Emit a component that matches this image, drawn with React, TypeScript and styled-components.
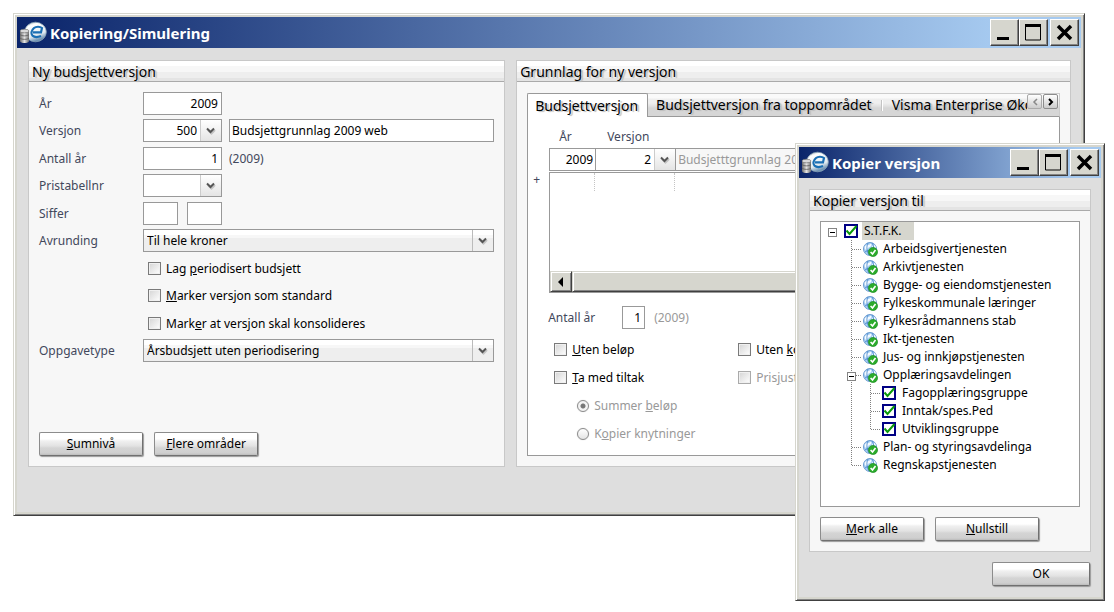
import React, { ReactNode, useState } from "react";
import styled, { createGlobalStyle, css } from "styled-components";

const GlobalStyle = createGlobalStyle`
  *, *::before, *::after { box-sizing: border-box; }
  body {
    margin: 0;
    background: #fff;
    font-family: "Noto Sans", "DejaVu Sans", sans-serif;
    font-size: 12px;
    line-height: 16px;
    color: #000;
  }
  input, select, button { font: inherit; color: inherit; margin: 0; }
`;

const line = "#999";
const labelColor = "#42485c";

/* ---------- window frame ---------- */

const Desktop = styled.main`
  position: relative;
  min-height: 100vh;
  padding: 13px 29px 97px 13px;
`;

const Frame = styled.section`
  display: flex;
  flex-direction: column;
  border: 1px solid;
  border-color: #d6d6ce #404040 #404040 #d6d6ce;
  background: #dedede;
  box-shadow: inset 1px 1px 0 #fff, inset -1px -1px 0 #848484, inset 2px 2px 0 1px #d6d6ce,
    inset -2px -2px 0 1px #d6d6ce;
  padding: 3px;
`;

const DialogFrame = styled(Frame)`
  position: absolute;
  top: 143px;
  right: 9px;
  width: 310px;
`;

const TitleBar = styled.header`
  display: flex;
  align-items: center;
  height: 31px;
  padding: 0 2px;
  background: linear-gradient(to right, #0a246a, #a6caf0 92%);
`;

const TitleText = styled.h1`
  flex: 1;
  margin: 0 0 0 3px;
  font-size: 15px;
  line-height: 20px;
  font-weight: 700;
  color: #fff;
  white-space: nowrap;
`;

const CaptionButton = styled.button<{ $apart?: boolean }>`
  display: grid;
  place-items: center;
  width: 29px;
  height: 27px;
  padding: 0;
  margin-left: ${(p) => (p.$apart ? "2px" : "0")};
  background: #d6d6ce;
  border: 1px solid;
  border-color: #fff #404040 #404040 #fff;
  box-shadow: inset -1px -1px 0 #848484;
`;

const AppIcon = () => (
  <svg width="28" height="24" viewBox="0 0 28 24" aria-hidden="true">
    <defs>
      <linearGradient id="ball" x1="0" y1="0" x2="0.4" y2="1">
        <stop offset="0" stopColor="#8fa3ae" />
        <stop offset="0.25" stopColor="#ffffff" />
        <stop offset="0.75" stopColor="#e2ebf1" />
        <stop offset="1" stopColor="#6f93b3" />
      </linearGradient>
      <linearGradient id="drum" x1="0" y1="0" x2="1" y2="0">
        <stop offset="0" stopColor="#6d6d6d" />
        <stop offset="0.5" stopColor="#e2e2e2" />
        <stop offset="1" stopColor="#707070" />
      </linearGradient>
    </defs>
    <ellipse cx="16.500" cy="11" rx="10.800" ry="9.800" fill="url(#ball)" stroke="#8ba4b8" strokeWidth="0.800" />
    <path d="M14 11.300 H22 L23 7 C21 5.300 17 5.300 15 7 C12 9.500 11.800 13 13.500 14.600 C15.500 16.400 19.500 16 22 15" fill="none" stroke="#1a6fb4" strokeWidth="2.200" />
    <path d="M1 10 V20 C1 22.800 10 22.800 10 20 V10 Z" fill="url(#drum)" />
    <ellipse cx="5.500" cy="10" rx="4.500" ry="1.800" fill="#d9d9d9" stroke="#777" strokeWidth="0.700" />
    <path d="M1 13.500 C2 15.300 9 15.300 10 13.500 M1 17 C2 18.800 9 18.800 10 17" fill="none" stroke="#5a5a5a" strokeWidth="0.800" />
  </svg>
);

const WindowTitle = ({ children }: { children: string }) => (
  <TitleBar>
    <AppIcon />
    <TitleText>{children}</TitleText>
    <CaptionButton type="button" aria-label="Minimer">
      <svg width="17" height="17">
        <rect x="1" y="13" width="12" height="3" />
      </svg>
    </CaptionButton>
    <CaptionButton type="button" aria-label="Maksimer">
      <svg width="17" height="17">
        <path d="M.5 1v15h15V1z" fill="none" stroke="#000" />
        <path d="M0 0h16v3H0z" />
      </svg>
    </CaptionButton>
    <CaptionButton type="button" aria-label="Lukk" $apart>
      <svg width="17" height="17">
        <path d="M2 2 L15 15 M15 2 L2 15" stroke="#000" strokeWidth="3.500" />
      </svg>
    </CaptionButton>
  </TitleBar>
);

/* ---------- panels ---------- */

const MainBody = styled.div`
  display: grid;
  grid-template-columns: minmax(0, 43fr) minmax(0, 50fr);
  gap: 11px;
  padding: 12px 10px 45px 11px;
`;

const DialogBody = styled.div`
  display: flex;
  flex-direction: column;
  padding: 11px 10px;
`;

const Panel = styled.section`
  display: flex;
  flex-direction: column;
  border: 1px solid #c8c8c8;
  background: #f7f7f7;
`;

const PanelTitle = styled.h2`
  margin: 0;
  height: 21px;
  padding: 0 3px;
  border-bottom: 1px solid #aaa;
  background: linear-gradient(#fff 0 5px, #f7f7f7 5px 11px, #eee 11px 17px, #e4e4e4 17px);
  font-size: 14px;
  line-height: 22px;
  font-weight: 400;
  text-shadow: 2px 1px 1px #bbb;
  white-space: nowrap;
`;

const PanelBody = styled.div`
  flex: 1;
  display: flex;
  flex-direction: column;
  padding: 10px;
`;

const ButtonRow = styled.div`
  display: flex;
  gap: 11px;
  margin-top: auto;
`;

const PushButton = styled.button<{ $wide?: boolean }>`
  width: ${(p) => (p.$wide ? "104px" : "98px")};
  height: 24px;
  padding: 0;
  border: 1px solid;
  border-color: #8c8c8c #707070 #707070 #8c8c8c;
  border-radius: 2px;
  background: linear-gradient(#fff 0 6px, #f0f0f0 8px, #e2e2e2 13px, #d4d4d4 15px, #cfcfcf 20px, #bbb);
  box-shadow: 1px 1px 1px #999;
`;

const OkRow = styled.div`
  display: flex;
  justify-content: flex-end;
  padding: 10px 1px 0 0;
`;

/* ---------- form controls ---------- */

const FormGrid = styled.div`
  display: grid;
  grid-template-columns: 104px minmax(0, 1fr);
  grid-auto-rows: 27px 28px;
`;

const Label = styled.label`
  line-height: 23px;
  color: ${labelColor};
  white-space: nowrap;
`;

const Line = styled.div`
  display: flex;
  align-items: center;
  height: 23px;
`;

const TextInput = styled.input<{ $size?: "pair" | "tiny" | "full"; $right?: boolean; $after?: number }>`
  height: 23px;
  padding: 0 3px 0 2px;
  border: 1px solid ${line};
  background: #fff;
  text-align: ${(p) => (p.$right ? "right" : "left")};
  margin-right: ${(p) => p.$after ?? 0}px;
  outline: none;
  ${(p) =>
    p.$size === "full"
      ? css`
          flex: 1;
          min-width: 0;
        `
      : css`
          width: ${p.$size === "tiny" ? "23px" : p.$size === "pair" ? "35px" : "79px"};
        `}
`;

const ComboBox = styled.div<{ $flat?: boolean }>`
  display: flex;
  width: ${(p) => (p.$flat ? "80px" : "79px")};
  height: 23px;
  margin-right: ${(p) => (p.$flat ? "0" : "7px")};
  border: 1px solid ${line};
  border-left-width: ${(p) => (p.$flat ? "0" : "1px")};
  background: #fff;

  input {
    flex: 1;
    min-width: 0;
    padding: 0 3px;
    border: 0;
    background: transparent;
    text-align: right;
    outline: none;
  }
`;

const ComboButton = styled.button`
  display: grid;
  place-items: center;
  width: 21px;
  padding: 0;
  border: 0;
  border-left: 1px solid #ccc;
  background: linear-gradient(#fff, #f5f5f5 8px, #e4e4e4);
`;

const Chevron = () => (
  <svg width="10" height="8" viewBox="0 0 10 8" aria-hidden="true">
    <path d="M2 3 L5.500 6.500 L9 3" fill="none" stroke="#c4c4c4" strokeWidth="2" />
    <path d="M1 1.500 L4.500 5 L8 1.500" fill="none" stroke="#555" strokeWidth="2" />
  </svg>
);

const Combo = ({ id, value, label, flat }: { id: string; value: string; label?: string; flat?: boolean }) => (
  <ComboBox $flat={flat}>
    <input id={id} defaultValue={value} aria-label={label} />
    <ComboButton type="button" aria-label="Velg">
      <Chevron />
    </ComboButton>
  </ComboBox>
);

const SelectBox = styled.div`
  display: grid;
  grid-template-columns: minmax(0, 1fr) 21px;
  height: 23px;
  border: 1px solid ${line};
  background: linear-gradient(#fff 0 5px, #f7f7f7 5px 8px, #eee 8px);

  select {
    grid-area: 1 / 1 / 2 / 3;
    appearance: none;
    padding: 0 24px 0 3px;
    border: 0;
    background: transparent;
    outline: none;
  }
`;

const SelectMark = styled.span`
  grid-area: 1 / 2;
  display: grid;
  place-items: center;
  border-left: 1px solid #bbb;
  pointer-events: none;
`;

const Select = ({ id, value }: { id: string; value: string }) => (
  <SelectBox>
    <select id={id}>
      <option>{value}</option>
    </select>
    <SelectMark>
      <Chevron />
    </SelectMark>
  </SelectBox>
);

const Choice = styled.label<{ $off?: boolean }>`
  display: flex;
  align-items: center;
  gap: 5px;
  height: 23px;
  color: ${(p) => (p.$off ? "#999" : "#000")};
  white-space: nowrap;
`;

const CheckInput = styled.input.attrs({ type: "checkbox" })`
  appearance: none;
  width: 13px;
  height: 13px;
  border: 1px solid #7a7a7a;
  background: linear-gradient(135deg, #d4d4d4, #fff);
  box-shadow: inset 0 0 0 1px #f0f0f0;

  &:checked { background: #555; }
  &:disabled { border-color: #aaa; }
`;

const RadioInput = styled.input.attrs({ type: "radio" })`
  appearance: none;
  width: 12px;
  height: 12px;
  border: 1px solid #8a8a8a;
  border-radius: 50%;
  background: linear-gradient(#fff, #e4e4e4);
  box-shadow: 0 0 1px #bbb;

  &:checked { background: radial-gradient(circle, #777 0 2px, #f4f4f4 3px); }
`;

const Indent = styled.div`
  padding-left: 5px;
`;

/* ---------- tabs ---------- */

const Tabs = styled.div`
  flex: 1;
  display: flex;
  flex-direction: column;
  margin-top: 1px;
`;

const TabStrip = styled.div`
  display: flex;
  height: 24px;
  border-top: 1px solid #ccc;
  border-right: 1px solid #ccc;
  border-bottom: 1px solid ${line};
  background: linear-gradient(#fafafa 0 4px, #efefef 5px 9px, #e2e2e2 12px, #d6d6d6 14px);
`;

const TabList = styled.div`
  flex: 1;
  display: flex;
  min-width: 0;
  margin: -1px 0;
  overflow: hidden;
`;

const Tab = styled.button<{ $active?: boolean }>`
  flex: none;
  padding: 0 9px 0 8px;
  border: 0;
  background: transparent;
  font-size: 14px;
  line-height: 22px;
  text-shadow: 2px 1px 1px #bbb;
  white-space: nowrap;
  border-right: 1px solid transparent;

  ${(p) =>
    p.$active &&
    css`
      border: 1px solid ${line};
      border-bottom: 0;
      border-radius: 2px 2px 0 0;
      background: #fff;
      padding: 0 9px 0 7px;
    `}
`;

const TabDivider = styled.span`
  flex: none;
  width: 1px;
  height: 11px;
  margin: 7px 1px 0 0;
  background: #fff;
  box-shadow: -1px 0 0 #c4c4c4;
`;

const TabArrow = styled.button`
  display: grid;
  place-items: center;
  width: 15px;
  height: 15px;
  margin-right: 1px;
  padding: 0;
  border: 1px solid #8c8c8c;
  border-radius: 2px;
  background: linear-gradient(#fff, #ccc);

  &:disabled { border-color: #aaa; }
`;

const TabPane = styled.div`
  flex: 1;
  display: flex;
  flex-direction: column;
  padding: 8px 11px 10px 5px;
  border: 1px solid ${line};
  border-top: 0;
  background: #fff;
`;

/* ---------- version grid in the right panel ---------- */

const HeadRow = styled.div`
  display: grid;
  grid-template-columns: 48px 1fr;
  padding-left: 26px;
`;

const GridBlock = styled.div`
  display: grid;
  grid-template-columns: 16px minmax(0, 1fr);
`;

const GridLine = styled.div`
  grid-column: 2;
  display: flex;
  margin-bottom: 1px;
`;

const YearInput = styled(TextInput)`
  width: 47px;
  padding-right: 2px;
`;

const NameInput = styled(TextInput)`
  border-left-width: 0;
  background: #f7f7f7;
  color: #999;
`;

const AddRow = styled.button`
  align-self: start;
  justify-self: start;
  padding: 0;
  border: 0;
  background: none;
  color: ${labelColor};
`;

const ListBox = styled.div`
  display: flex;
  flex-direction: column;
  justify-content: space-between;
  height: 121px;
  border: 1px solid ${line};
`;

const ColumnMarks = styled.div`
  display: grid;
  grid-template-columns: 44px 80px 1fr;
  height: 18px;

  span + span { border-left: 1px dotted #c4c4c4; }
`;

const ScrollBar = styled.div`
  display: grid;
  grid-template-columns: 22px 1fr;
  height: 21px;
`;

const ScrollPart = styled.button`
  display: grid;
  place-items: center;
  padding: 0;
  border: 1px solid;
  border-color: #d6d6ce #404040 #404040 #d6d6ce;
  background: #d6d6ce;
  box-shadow: inset 1px 1px 0 #fff, inset -1px -1px 0 #848484;
`;

const YearsRow = styled.div`
  display: flex;
  align-items: center;
  padding: 13px 0 9px 15px;

  label { width: 74px; }
`;

const Muted = styled.span<{ $strong?: boolean }>`
  color: ${(p) => (p.$strong ? labelColor : "#999")};
`;

const Options = styled.div`
  display: grid;
  grid-template-columns: 184px 1fr;
  row-gap: 5px;
  padding-left: 21px;
`;

const RadioRow = styled.div`
  grid-column: 1 / 3;
  padding-left: 23px;
`;

/* ---------- tree ---------- */

const TreeBox = styled.ul`
  list-style: none;
  height: 286px;
  margin: 0 0 10px;
  padding: 0 0 0 2px;
  border: 1px solid ${line};
  background: #fff;
`;

const TreeRow = styled.li`
  display: flex;
  align-items: center;
  height: 18px;
`;

const TreeLabel = styled.label<{ $selected?: boolean }>`
  height: 18px;
  margin-left: 3px;
  padding: 0 2px;
  padding-right: ${(p) => (p.$selected ? "12px" : "2px")};
  line-height: 18px;
  background: ${(p) => (p.$selected ? "#d6d6ce" : "transparent")};
  white-space: nowrap;
`;

const CheckCell = styled.span`
  display: grid;
  margin-left: 2px;

  input, svg { grid-area: 1 / 1; }
  svg { pointer-events: none; }
`;

const TreeCheck = styled.input.attrs({ type: "checkbox" })`
  appearance: none;
  width: 14px;
  height: 14px;
  margin-right: 1px;
  border: 2px solid #000084;
  background: #fff;

  &:not(:checked) + svg { visibility: hidden; }
`;

const GlobeCell = styled.span`
  display: grid;
  margin-left: 2px;
`;

type GuideKind = "blank" | "through" | "branch" | "last" | "root" | "node";

const Guide = ({ kind }: { kind: GuideKind }) => (
  <svg width="19" height="18" aria-hidden="true">
    {kind !== "blank" && kind !== "root" && (
      <path d={kind === "last" ? "M9.500 0V10" : "M9.500 0V18"} stroke="#808080" strokeDasharray="1 1" />
    )}
    {(kind === "branch" || kind === "last" || kind === "node") && (
      <path d="M10 9.500H20" stroke="#808080" strokeDasharray="1 1" />
    )}
    {(kind === "root" || kind === "node") && (
      <>
        <rect x="5.500" y="6.500" width="8" height="8" fill="#fff" stroke="#848484" />
        <path d="M7 10.500H12" stroke="#000" />
      </>
    )}
  </svg>
);

const Globe = () => (
  <svg width="15" height="15" viewBox="0 0 15 15" aria-hidden="true">
    <circle cx="7" cy="7" r="6.500" fill="#a9d0f5" stroke="#6a9bd0" />
    <path d="M2 4 C4 2 6 4 7 2 C9 1 9 4 7 5 C5 5 5 7 3 8 C2 7 1 6 2 4z M9 4 L12 3 L13 6 L10 6z" fill="#f4faff" />
    <path d="M2 10 C5 8 7 8 13 7 M5 1 C3 5 4 10 6 13 M9 1 C11 4 11 6 10 9" fill="none" stroke="#3f7fc6" strokeWidth="0.800" />
    <circle cx="10" cy="10" r="4.600" fill="#2bab2b" stroke="#168a1c" strokeWidth="0.600" />
    <path d="M7.600 10 L9.500 12 L12.500 8" fill="none" stroke="#fff" strokeWidth="1.600" />
  </svg>
);

interface Node {
  name: string;
  guides: GuideKind[];
  check?: boolean;
  selected?: boolean;
}

const nodes: Node[] = [
  { name: "S.T.F.K.", guides: ["root"], check: true, selected: true },
  { name: "Arbeidsgivertjenesten", guides: ["blank", "branch"] },
  { name: "Arkivtjenesten", guides: ["blank", "branch"] },
  { name: "Bygge- og eiendomstjenesten", guides: ["blank", "branch"] },
  { name: "Fylkeskommunale læringer", guides: ["blank", "branch"] },
  { name: "Fylkesrådmannens stab", guides: ["blank", "branch"] },
  { name: "Ikt-tjenesten", guides: ["blank", "branch"] },
  { name: "Jus- og innkjøpstjenesten", guides: ["blank", "branch"] },
  { name: "Opplæringsavdelingen", guides: ["blank", "node"] },
  { name: "Fagopplæringsgruppe", guides: ["blank", "through", "branch"], check: true },
  { name: "Inntak/spes.Ped", guides: ["blank", "through", "branch"], check: true },
  { name: "Utviklingsgruppe", guides: ["blank", "through", "last"], check: true },
  { name: "Plan- og styringsavdelinga", guides: ["blank", "branch"] },
  { name: "Regnskapstjenesten", guides: ["blank", "last"] },
];

const Tree = () => (
  <TreeBox>
    {nodes.map((n, i) => (
      <TreeRow key={n.name}>
        {n.guides.map((g, k) => (
          <Guide key={k} kind={g} />
        ))}
        {n.check ? (
          <CheckCell>
            <TreeCheck id={`node-${i}`} defaultChecked />
            <svg width="14" height="14" aria-hidden="true">
              <path d="M2.500 6.500 L5.500 10 L12.500 2" fill="none" stroke="#0a9a0a" strokeWidth="2" />
            </svg>
          </CheckCell>
        ) : (
          <GlobeCell>
            <Globe />
          </GlobeCell>
        )}
        <TreeLabel as={n.check ? "label" : "span"} htmlFor={n.check ? `node-${i}` : undefined} $selected={n.selected}>
          {n.name}
        </TreeLabel>
      </TreeRow>
    ))}
  </TreeBox>
);

/* ---------- page ---------- */

const Check = ({ children, off }: { children: ReactNode; off?: boolean }) => (
  <Choice $off={off}>
    <CheckInput disabled={off} />
    <span>{children}</span>
  </Choice>
);

const NewVersionPanel = () => (
  <Panel>
    <PanelTitle>Ny budsjettversjon</PanelTitle>
    <PanelBody>
      <FormGrid>
        <Label htmlFor="year">År</Label>
        <Line>
          <TextInput id="year" defaultValue="2009" $right />
        </Line>
        <Label htmlFor="version">Versjon</Label>
        <Line>
          <Combo id="version" value="500" />
          <TextInput aria-label="Versjonsnavn" defaultValue="Budsjettgrunnlag 2009 web" $size="full" />
        </Line>
        <Label htmlFor="years">Antall år</Label>
        <Line>
          <TextInput id="years" defaultValue="1" $right $after={7} />
          <Muted $strong>(2009)</Muted>
        </Line>
        <Label htmlFor="prices">Pristabellnr</Label>
        <Line>
          <Combo id="prices" value="" />
        </Line>
        <Label htmlFor="digits">Siffer</Label>
        <Line>
          <TextInput id="digits" $size="pair" $after={9} />
          <TextInput aria-label="Siffer til" $size="pair" />
        </Line>
        <Label htmlFor="rounding">Avrunding</Label>
        <Select id="rounding" value="Til hele kroner" />
        <span />
        <Indent>
          <Check>
            Lag <u>p</u>eriodisert budsjett
          </Check>
        </Indent>
        <span />
        <Indent>
          <Check>
            <u>M</u>arker versjon som standard
          </Check>
        </Indent>
        <span />
        <Indent>
          <Check>
            Mark<u>e</u>r at versjon skal konsolideres
          </Check>
        </Indent>
        <Label htmlFor="task">Oppgavetype</Label>
        <Select id="task" value="Årsbudsjett uten periodisering" />
      </FormGrid>
      <ButtonRow>
        <PushButton type="button" $wide>
          <u>S</u>umnivå
        </PushButton>
        <PushButton type="button" $wide>
          <u>F</u>lere områder
        </PushButton>
      </ButtonRow>
    </PanelBody>
  </Panel>
);

const tabNames = ["Budsjettversjon", "Budsjettversjon fra toppområdet", "Visma Enterprise Økonomi"];

const BasisPanel = () => {
  const [active, setActive] = useState(0);
  return (
    <Panel>
      <PanelTitle>Grunnlag for ny versjon</PanelTitle>
      <PanelBody>
        <Tabs>
          <TabStrip>
            <TabList role="tablist">
              {tabNames.map((name, i) => (
                <React.Fragment key={name}>
                  {i === 2 && <TabDivider />}
                  <Tab type="button" role="tab" aria-selected={i === active} $active={i === active} onClick={() => setActive(i)}>
                    {name}
                  </Tab>
                </React.Fragment>
              ))}
            </TabList>
            <TabArrow type="button" aria-label="Forrige fane" disabled>
              <svg width="8" height="8">
                <path d="M6 1 L3 4 L6 7" fill="none" stroke="#888" strokeWidth="1.500" />
              </svg>
            </TabArrow>
            <TabArrow type="button" aria-label="Neste fane">
              <svg width="8" height="8">
                <path d="M2 1 L5 4 L2 7" fill="none" stroke="#000" strokeWidth="2" />
              </svg>
            </TabArrow>
          </TabStrip>
          <TabPane>
            <HeadRow>
              <Label htmlFor="base-year">År</Label>
              <Label htmlFor="base-version">Versjon</Label>
            </HeadRow>
            <GridBlock>
              <GridLine>
                <YearInput id="base-year" defaultValue="2009" $right />
                <Combo id="base-version" value="2" flat />
                <NameInput aria-label="Versjonsnavn" defaultValue="Budsjetttgrunnlag 2009 web" readOnly $size="full" />
              </GridLine>
              <AddRow type="button" aria-label="Legg til">
                +
              </AddRow>
              <ListBox>
                <ColumnMarks>
                  <span />
                  <span />
                  <span />
                </ColumnMarks>
                <ScrollBar>
                  <ScrollPart type="button" aria-label="Rull til venstre">
                    <svg width="9" height="10">
                      <path d="M6 0v10L1 5z" />
                    </svg>
                  </ScrollPart>
                  <ScrollPart type="button" aria-label="Rullefelt" />
                </ScrollBar>
              </ListBox>
            </GridBlock>
            <YearsRow>
              <Label htmlFor="base-years">Antall år</Label>
              <TextInput id="base-years" defaultValue="1" $right $size="tiny" $after={9} />
              <Muted>(2009)</Muted>
            </YearsRow>
            <Options>
              <Check>
                <u>U</u>ten beløp
              </Check>
              <Check>
                Uten <u>k</u>ommentarer
              </Check>
              <Check>
                <u>T</u>a med tiltak
              </Check>
              <Check off>
                Pris<u>j</u>ustering
              </Check>
              <RadioRow>
                <Choice $off>
                  <RadioInput name="measure" defaultChecked disabled />
                  <span>
                    Summer <u>b</u>eløp
                  </span>
                </Choice>
              </RadioRow>
              <RadioRow>
                <Choice $off>
                  <RadioInput name="measure" disabled />
                  <span>
                    K<u>o</u>pier knytninger
                  </span>
                </Choice>
              </RadioRow>
            </Options>
          </TabPane>
        </Tabs>
      </PanelBody>
    </Panel>
  );
};

export default function App() {
  return (
    <>
      <GlobalStyle />
      <Desktop>
        <Frame>
          <WindowTitle>Kopiering/Simulering</WindowTitle>
          <MainBody>
            <NewVersionPanel />
            <BasisPanel />
          </MainBody>
        </Frame>
        <DialogFrame role="dialog" aria-label="Kopier versjon">
          <WindowTitle>Kopier versjon</WindowTitle>
          <DialogBody>
            <Panel>
              <PanelTitle>Kopier versjon til</PanelTitle>
              <PanelBody>
                <Tree />
                <ButtonRow>
                  <PushButton type="button" $wide>
                    <u>M</u>erk alle
                  </PushButton>
                  <PushButton type="button" $wide>
                    <u>N</u>ullstill
                  </PushButton>
                </ButtonRow>
              </PanelBody>
            </Panel>
            <OkRow>
              <PushButton type="button">OK</PushButton>
            </OkRow>
          </DialogBody>
        </DialogFrame>
      </Desktop>
    </>
  );
}
